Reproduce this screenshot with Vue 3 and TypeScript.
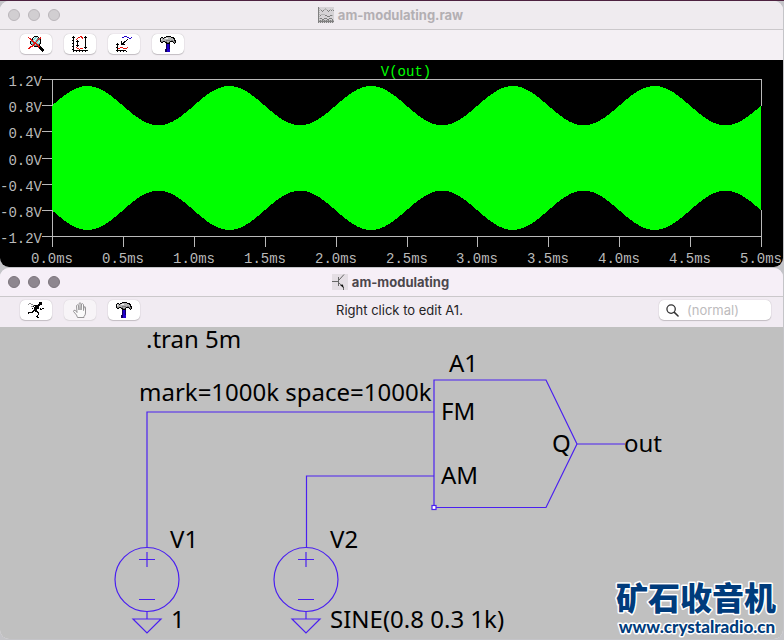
<script setup lang="ts">
import { ref } from 'vue'

const palette: Record<string, string> = {
  K: '#000000', R: '#e8120c', G: '#b4b4b4', W: '#f4f4f4', D: '#808080',
  B: '#2200cc', N: '#10005c', C: '#7fdcdc', H: '#8c8c8c',
}

const maps: Record<string, string[]> = {
  zoomOff: [
    '......KKKK......',
    'R....KWCCWK.R...',
    '.RR.KWCCWDDRR...',
    '..RRKCCWCDRDK...',
    '...RRCWCDRCCK...',
    '..KDRRCCRCCWK...',
    '..KCCRRRCCWCK...',
    '..KCCDRRRCCDK...',
    '...KDRRCRRDK....',
    '....RRDDDRRK....',
    '..RRR.KKKKRRK...',
    '.RR.......RKKK..',
    'RR.........KKKK.',
    '............KKKK',
    '.............KKK',
    '..............K.',
  ],
  autorange: [
    '.K......RR...K..',
    'KKK...RR.RR.KKK.',
    '.K...R....R..K..',
    '.K..R........K..',
    'KK...K.......K..',
    '.K..KKK......K..',
    '.K...K.......K..',
    'KK...K.......K..',
    '.K...K.......K..',
    '.K..KKK......K..',
    'KK...K.......K..',
    '.K..R.......KKK.',
    '.K...RR.RRR..K..',
    'KK.....R........',
    '.KKKKKKKKKKKKKKK',
    '.K..K..K..K..K..',
  ],
  pickTrace: [
    '........BBB.....',
    '......BB...BB..B',
    '.............BB.',
    '...........K....',
    '..........K.....',
    '.....K..KK......',
    '.....K.KK.......',
    '.K...KKK........',
    'KKK..KKKK.......',
    '.K..............',
    '.K..............',
    'KK..RRR....R....',
    '.KRR...RRRR.....',
    '.K..............',
    'KKKKKKKKKK......',
    '.K..K..K..K.....',
  ],
  hammer: [
    '......KKKKK.....',
    '.KK.KKGGGGGKKK..',
    'KGGKGWWWGGGGGKK.',
    'KWGGGGGGGGGGGGK.',
    'KGGGGGDDDDGDDGKK',
    'KDDKKDDGGDKKKDDK',
    '.KK..KKDDK...KDK',
    '......KKKK....K.',
    '......NBBN......',
    '......NBBN......',
    '......NBBN......',
    '......NBBN......',
    '......NBBN......',
    '.....NNBBB......',
    '.....NNBBB......',
    '.....NNBBB......',
  ],
  run: [
    '...........KKK..',
    '.HH........KKK..',
    'H..HH.....KKKK..',
    '.....HKKKKKK....',
    '...HHK.KKKK.....',
    '......KKKKK.....',
    '....K.KKKKK.K.KK',
    '......KKK...KK..',
    '.....KKKK.......',
    '....KK.KKK......',
    'KKKKK....KK.....',
    'K.........K.....',
    '..........K.....',
    '.........K......',
    '........KK......',
    '.........KK.....',
  ],
  trace: [
    'D...............',
    'DG.....G........',
    'D.G...GGG...G.G.',
    'DG.D.D...D.D.D.D',
    'D...D.....D.....',
    'DG..............',
    'D...............',
    'DG.GGGG.........',
    'D.D....DD...DDG.',
    'DG.......DDD....',
    'D...............',
    'DGDD..DDD..DDD..',
    'D...DD...DD...D.',
    'DGDGDGDGDGDGDGDG',
    'DDDDDDDDDDDDDDDD',
    'D.D.D.D.D.D.D.D.',
  ],
}

interface Pixel { x: number; y: number; fill: string }

function pixels(name: string): Pixel[] {
  const out: Pixel[] = []
  maps[name].forEach((row, y) => {
    row.split('').forEach((c, x) => {
      if (palette[c]) out.push({ x, y, fill: palette[c] })
    })
  })
  return out
}

const plotButtons = [
  { icon: 'zoomOff', label: 'Zoom to fit' },
  { icon: 'autorange', label: 'Autorange' },
  { icon: 'pickTrace', label: 'Add trace' },
  { icon: 'hammer', label: 'Control panel' },
]

const left = 52
const right = 761
const middle = 98
const pxPerVolt = 65.4

const voltTicks = [1.2, 0.8, 0.4, 0, -0.4, -0.8, -1.2].map((v, i) => ({
  y: Math.round(19 + i * 26.2), label: v.toFixed(1) + 'V',
}))
const timeTicks = Array.from({ length: 11 }, (_, i) => ({
  x: Math.round(left + (i * (right - left)) / 10), label: (i * 0.5).toFixed(1) + 'ms',
}))

const envelope = (() => {
  const top: string[] = []
  const bottom: string[] = []
  for (let x = left; x <= right; x += 1) {
    const t = ((x - left) / (right - left)) * 5
    const a = (0.8 + 0.3 * Math.sin(2 * Math.PI * t)) * pxPerVolt
    top.push(`${x},${(middle - a).toFixed(1)}`)
    bottom.unshift(`${x},${(middle + a).toFixed(1)}`)
  }
  return top.concat(bottom).join(' ')
})()

const sources = [147, 306]
const search = ref('')
</script>

<template>
  <main class="desktop">
    <section class="window plot-window">
      <header class="titlebar">
        <div class="lights"><i></i><i></i><i></i></div>
        <h1>
          <svg class="pix" viewBox="0 0 16 16" aria-hidden="true">
            <rect width="16" height="16" fill="#d6d3d6" />
            <rect v-for="(p, i) in pixels('trace')" :key="i" :x="p.x" :y="p.y" width="1" height="1" :fill="p.fill" />
          </svg>
          <span>am-modulating.raw</span>
        </h1>
      </header>
      <div class="toolbar">
        <button v-for="b in plotButtons" :key="b.icon" type="button" :aria-label="b.label">
          <svg class="pix" viewBox="0 0 16 16" aria-hidden="true">
            <rect v-for="(p, i) in pixels(b.icon)" :key="i" :x="p.x" :y="p.y" width="1" height="1" :fill="p.fill" />
          </svg>
        </button>
      </div>
      <svg class="plot" viewBox="0 0 783 207">
        <polygon :points="envelope" fill="#00ff00" shape-rendering="crispEdges" />
        <g stroke="#b9b9b9" shape-rendering="crispEdges">
          <path d="M52.5 19.5H761.5M52.5 176.5H761.5M52.5 19V46M761.5 19V46M52.5 150V186M761.5 150V186" fill="none" />
          <line v-for="t in voltTicks" :key="t.label" x1="42" x2="52" :y1="t.y + 0.5" :y2="t.y + 0.5" />
          <line v-for="t in timeTicks" :key="t.label" :x1="t.x + 0.5" :x2="t.x + 0.5" y1="176" y2="187" />
        </g>
        <g class="axis">
          <text v-for="t in voltTicks" :key="t.label" x="42" :y="t.y + 7" text-anchor="end">{{ t.label }}</text>
          <text v-for="t in timeTicks" :key="t.label" :x="t.x" y="203" text-anchor="middle">{{ t.label }}</text>
          <text class="signal" x="406" y="16" text-anchor="middle">V(out)</text>
        </g>
      </svg>
    </section>

    <section class="window schematic-window">
      <header class="titlebar active">
        <div class="lights"><i></i><i></i><i></i></div>
        <h1>
          <svg viewBox="0 0 16 16" aria-hidden="true">
            <rect width="16" height="16" fill="#e4dee4" />
            <path d="M0 7.500H6M6.500 3V12M7 6L12 0.500M7 9L11.500 13V16" fill="none" stroke="#666" />
            <path d="M8 11L11 10.500L11.500 14z" fill="#111" />
          </svg>
          <span>am-modulating</span>
        </h1>
      </header>
      <div class="toolbar split">
        <div class="tools">
          <button type="button" aria-label="Run">
            <svg class="pix" viewBox="0 0 16 16" aria-hidden="true">
              <rect v-for="(p, i) in pixels('run')" :key="i" :x="p.x" :y="p.y" width="1" height="1" :fill="p.fill" />
            </svg>
          </button>
          <button type="button" disabled aria-label="Halt">
            <svg viewBox="0 0 16 16" aria-hidden="true">
              <path d="M5.500 15.500L4.500 13L1.500 9.500Q1.500 7.500 3.500 8.500L5 10.500L4.500 3.500Q5 2 6.500 3.500L7 8V1.500Q8 0 9 1.500V8L9.500 2Q10.500 1 11.500 2.500V8.500L12 5Q13.500 4 13.500 6V11Q13.500 13 12 14.500V15.500z" fill="#fafafa" stroke="#969496" />
            </svg>
          </button>
          <button type="button" aria-label="Control panel">
            <svg class="pix" viewBox="0 0 16 16" aria-hidden="true">
              <rect v-for="(p, i) in pixels('hammer')" :key="i" :x="p.x" :y="p.y" width="1" height="1" :fill="p.fill" />
            </svg>
          </button>
        </div>
        <p class="status">Right click to edit A1.</p>
        <label class="search">
          <svg viewBox="0 0 14 14" aria-hidden="true">
            <circle cx="5.500" cy="5.500" r="4.500" fill="none" stroke="#333" stroke-width="1.400" />
            <path d="M9 9L13 13" stroke="#333" stroke-width="1.600" stroke-linecap="round" />
          </svg>
          <input v-model="search" type="text" placeholder="(normal)" aria-label="Search" />
        </label>
      </div>
      <svg class="schematic" viewBox="0 0 783 312">
        <g fill="none" stroke="#4a20f0" stroke-width="1.200">
          <path d="M434 85H147V220M434 149H306.500V220" />
          <path d="M434 53H546L577 117L546 180.500H434zM577 117H625" />
          <g v-for="x in sources" :key="x">
            <circle :cx="x" cy="252.500" r="32" />
            <path :d="`M${x - 8} 232.500H${x + 8}M${x} 225V240M${x - 8} 272.500H${x + 8}M${x} 284V292M${x - 14} 292H${x + 14}L${x} 306z`" />
          </g>
          <rect x="432" y="178.500" width="4" height="4" fill="#fff" />
        </g>
        <g class="labels">
          <text x="146" y="21">.tran 5m</text>
          <text x="139" y="74">mark=1000k space=1000k</text>
          <text x="449" y="45">A1</text>
          <text x="441" y="93">FM</text>
          <text x="441" y="157">AM</text>
          <text x="552" y="125">Q</text>
          <text x="624" y="125">out</text>
          <text x="170" y="221">V1</text>
          <text x="171" y="301">1</text>
          <text x="330" y="221">V2</text>
          <text x="330" y="301">SINE(0.8 0.3 1k)</text>
        </g>
        <g class="mark">
          <text class="mark-name" x="696" y="283" text-anchor="middle">矿石收音机</text>
          <text class="mark-url" x="697" y="306" text-anchor="middle">www.crystalradio.cn</text>
        </g>
      </svg>
    </section>
  </main>
</template>

<style>
body {
  margin: 0;
  background: #c9c8cc;
}
</style>

<style scoped>
.desktop {
  display: flex;
  flex-direction: column;
  gap: 1px;
  padding: 1px 1px 1px 0;
  background: linear-gradient(#4e2240 0, #4e2240 1px, #c4c4c8 1px);
  font-family: Inter, "Liberation Sans", sans-serif;
}
.window {
  overflow: hidden;
  border-radius: 9px;
  background: #f4f0f4;
}
.schematic-window {
  background: #f1ebf2;
}
.titlebar {
  display: grid;
  grid-template-columns: 1fr auto 1fr;
  align-items: center;
  height: 28px;
  border-bottom: 1px solid #cbc8cb;
  background: #efebef;
}
.titlebar.active {
  background: #f6eff7;
}
.lights {
  display: flex;
  gap: 8px;
  padding-left: 8px;
}
.lights i {
  box-sizing: border-box;
  width: 12px;
  height: 12px;
  border: 1px solid #b9b5b9;
  border-radius: 50%;
  background: #d1ced1;
}
.active .lights i {
  border-color: #7c757c;
  background: #8e878f;
}
h1 {
  display: flex;
  align-items: center;
  gap: 4px;
  margin: 0;
  padding-right: 2px;
  color: #b3afb3;
  font-size: 13px;
  font-weight: 700;
  line-height: 16px;
}
.active h1 {
  color: #4c474d;
}
h1 svg,
button svg {
  display: block;
  width: 16px;
  height: 16px;
}
.pix {
  shape-rendering: crispEdges;
}
.toolbar {
  display: flex;
  align-items: center;
  gap: 12px;
  box-sizing: border-box;
  height: 30px;
  padding: 0 12px 2px 20px;
}
.toolbar button {
  display: grid;
  place-items: center;
  width: 32px;
  height: 20px;
  padding: 0;
  border: 0;
  border-radius: 5px;
  background: #fff;
  box-shadow: 0 0 1px #aaa6aa, 0 1px 1px #c5c0c5;
}
.toolbar button:disabled {
  background: #f7f4f7;
  box-shadow: 0 0 1px #c8c4c8, 0 1px 1px #dedade;
}
.toolbar.split {
  display: grid;
  grid-template-columns: 1fr auto 1fr;
  gap: 0;
  padding-bottom: 4px;
}
.tools {
  display: flex;
  gap: 12px;
}
.status {
  margin: 0;
  padding-left: 8px;
  color: #242225;
  font-size: 13px;
  line-height: 18px;
}
.search {
  display: flex;
  align-items: center;
  justify-self: end;
  gap: 8px;
  box-sizing: border-box;
  width: 112px;
  height: 20px;
  padding: 0 7px;
  border-radius: 5px;
  background: #fff;
  box-shadow: 0 0 1px #aaa6aa, 0 1px 1px #c5c0c5;
}
.search svg {
  flex: none;
  width: 13px;
  height: 13px;
}
.search input {
  width: 100%;
  min-width: 0;
  padding: 0;
  border: 0;
  outline: 0;
  background: none;
  font: 13px Inter, "Liberation Sans", sans-serif;
}
.search input::placeholder {
  color: #bdbbbd;
}
.plot,
.schematic {
  display: block;
  width: 100%;
  height: auto;
  overflow: visible;
}
.plot {
  background: #000;
}
.axis {
  fill: #b9b9b9;
  font-family: "Liberation Mono", monospace;
  font-size: 14px;
}
.signal {
  fill: #00ff00;
}
.schematic {
  background: #c0c0c0;
}
.labels {
  fill: #000;
  font-family: "Noto Sans", sans-serif;
  font-size: 24px;
}
.mark {
  fill: #003c7c;
  stroke: #fff;
  stroke-width: 3px;
  stroke-linejoin: round;
  paint-order: stroke;
}
.mark-name {
  font-family: "Noto Sans CJK SC", sans-serif;
  font-size: 32px;
  font-weight: 900;
}
.mark-url {
  font-family: Lato, sans-serif;
  font-size: 17px;
  font-weight: 900;
}
</style>
